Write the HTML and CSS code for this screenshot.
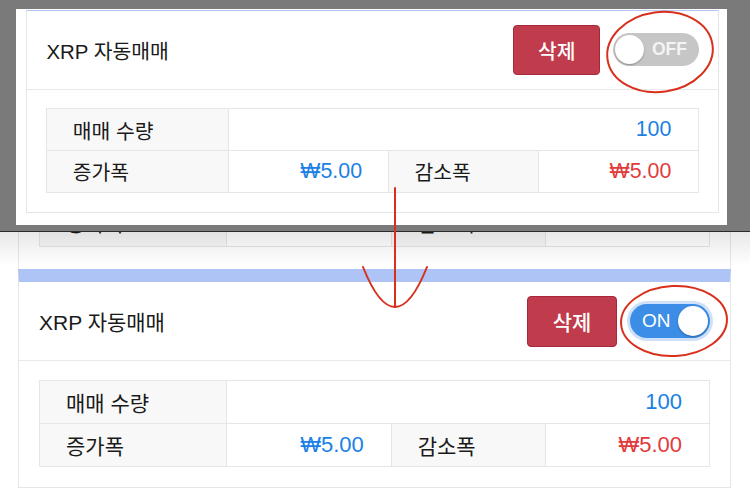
FILE: index.html
```html
<!DOCTYPE html>
<html lang="ko">
<head>
  <meta charset="UTF-8" />
  <title>XRP 자동매매</title>
  <link rel="stylesheet" href="styles.css">
</head>
<body>

  <!-- 위 캡처: 꺼진 상태 -->
  <section class="shot shot-off">
    <div class="frame">
      <div class="card">
        <div class="card-head">
          <h2>XRP 자동매매</h2>
          <div class="actions">
            <button class="btn-del">삭제</button>
            <span class="toggle off"><i class="knob"></i><b>OFF</b></span>
          </div>
        </div>
        <div class="card-body">
          <table class="info">
            <colgroup><col class="c1"><col class="c2"><col class="c3"><col class="c4"></colgroup>
            <tr>
              <td class="lbl">매매 수량</td>
              <td class="num" colspan="3">100</td>
            </tr>
            <tr>
              <td class="lbl">증가폭</td>
              <td class="num">₩5.00</td>
              <td class="lbl">감소폭</td>
              <td class="num minus">₩5.00</td>
            </tr>
          </table>
        </div>
      </div>
    </div>
  </section>

  <div class="cut"></div>

  <!-- 아래 캡처: 켜진 상태 -->
  <section class="shot shot-on">
    <div class="card-prev">
      <div class="clip">
        <table class="info">
          <colgroup><col class="c1"><col class="c2"><col class="c3"><col class="c4"></colgroup>
          <tr>
            <td class="lbl">증가폭</td>
            <td class="num">₩5.00</td>
            <td class="lbl">감소폭</td>
            <td class="num minus">₩5.00</td>
          </tr>
        </table>
      </div>
    </div>

    <div class="card">
      <div class="card-head">
        <h2>XRP 자동매매</h2>
        <div class="actions">
          <button class="btn-del">삭제</button>
          <span class="toggle on"><b>ON</b><i class="knob"></i></span>
        </div>
      </div>
      <div class="card-body">
        <table class="info">
          <colgroup><col class="c1"><col class="c2"><col class="c3"><col class="c4"></colgroup>
          <tr>
            <td class="lbl">매매 수량</td>
            <td class="num" colspan="3">100</td>
          </tr>
          <tr>
            <td class="lbl">증가폭</td>
            <td class="num">₩5.00</td>
            <td class="lbl">감소폭</td>
            <td class="num minus">₩5.00</td>
          </tr>
        </table>
      </div>
    </div>
  </section>

  <!-- 빨간 표시 (동그라미, 화살표) -->
  <svg class="marks" width="750" height="504" viewBox="0 0 750 504">
    <g fill="none" stroke="#d8301c" stroke-width="2" stroke-linecap="round">
      <ellipse cx="660" cy="52" rx="53" ry="40" transform="rotate(-8 660 52)"/>
      <ellipse cx="674" cy="321" rx="53" ry="35" transform="rotate(-3 674 321)"/>
      <path d="M395 188 V307"/>
      <path d="M363 267 Q395 347 427 267"/>
    </g>
  </svg>

</body>
</html>
```

FILE: styles.css
```css
/* 기본 리셋 */
* {
  margin: 0;
  padding: 0;
  box-sizing: border-box;
}

body {
  position: relative;
  width: 750px;
  height: 504px;
  overflow: hidden;
  background: #fff;
  color: #222;
  font-family: "Liberation Sans", "Noto Sans CJK KR", sans-serif;
}

/* 위 캡처 - 회색 배경 위 흰 패널 */
.shot-off {
  height: 231px;
  background: #7a7a7a;
  padding: 9px 23px 0 16px;
}

.frame {
  height: 216px;
  background: #fff;
  padding: 1px 8px 0 10px;
}

/* 위 캡처는 조금 작게 찍힘 */
.frame .card {
  zoom: 0.972;
  margin: 0;
  border-top: 2px solid #b3c7f5;
}

.frame .card-head {
  height: 81px;
}

.frame .toggle.off {
  width: 88px;
}

.cut {
  height: 1px;
  background: #2b2b2b;
}

/* 아래 캡처 */
.shot-on {
  position: relative;
  height: 272px;
}

/* 위쪽 그림자 */
.shot-on::after {
  content: "";
  position: absolute;
  left: 0;
  right: 0;
  top: 0;
  height: 34px;
  background: linear-gradient(rgba(0,0,0,0.09), rgba(0,0,0,0));
}

/* 앞 카드의 잘린 아랫부분 */
.card-prev {
  height: 37px;
  margin: 0 19px 0 18px;
  padding: 0 20px;
  border-left: 1px solid #e4e6ea;
  border-right: 1px solid #e4e6ea;
}

.clip {
  height: 15px;
  overflow: hidden;
}

.clip .info {
  margin-top: -29px;
}

.clip .info td {
  padding-bottom: 7px;
}

/* 카드 */
.card {
  margin: 0 19px 0 18px;
  border: 1px solid #e4e6ea;
  border-top: 13px solid #aec4f6;
  background: #fff;
}

.card-head {
  height: 79px;
  display: flex;
  align-items: center;
  justify-content: space-between;
  padding: 0 20px;
  border-bottom: 1px solid #e9e9e9;
}

.card-head h2 {
  font-size: 21px;
  font-weight: 400;
  color: #1a1a1a;
}

.actions {
  display: flex;
  align-items: center;
  gap: 13px;
}

/* 삭제 버튼 */
.btn-del {
  width: 90px;
  height: 51px;
  background: #c03b4b;
  border: 1px solid #a6283a;
  border-radius: 4px;
  color: #fff;
  font-family: inherit;
  font-size: 21px;
  font-weight: 500;
}

/* 스위치 */
.toggle {
  width: 80px;
  height: 34px;
  border-radius: 17px;
  display: flex;
  align-items: center;
  justify-content: space-between;
}

.toggle.on {
  background: #3b8de6;
  box-shadow: 0 0 0 3px #cfe1f9;
  padding: 0 2px 0 12px;
}

.toggle.off {
  background: #c6c6c6;
  padding: 0 12px 0 2px;
}

.knob {
  width: 30px;
  height: 30px;
  border-radius: 50%;
  background: #fff;
  box-shadow: 0 1px 2px rgba(0,0,0,0.3);
}

.toggle b {
  color: #fff;
  font-size: 19px;
  font-weight: 400;
}

.toggle.off b {
  color: #f4f4f4;
  font-weight: 700;
  font-size: 18px;
}

.card-body {
  padding: 19px 20px 20px;
}

/* 정보 표 */
.info {
  width: 100%;
  border-collapse: collapse;
  table-layout: fixed;
  font-size: 21px;
}

.info .c1 { width: 27.9%; }
.info .c2 { width: 24.6%; }
.info .c3 { width: 23%; }
.info .c4 { width: 24.5%; }

.info td {
  height: 43px;
  padding: 0 27px 0 26px;
  border: 1px solid #e6e6e6;
  vertical-align: middle;
  white-space: nowrap;
}

.info .lbl {
  background: #f8f8f8;
  color: #1a1a1a;
}

.info .num {
  text-align: right;
  color: #1a80e5;
  font-size: 22px;
}

.info .minus {
  color: #e13b3b;
}

/* 빨간 표시 */
.marks {
  position: absolute;
  left: 0;
  top: 0;
  pointer-events: none;
}
```
